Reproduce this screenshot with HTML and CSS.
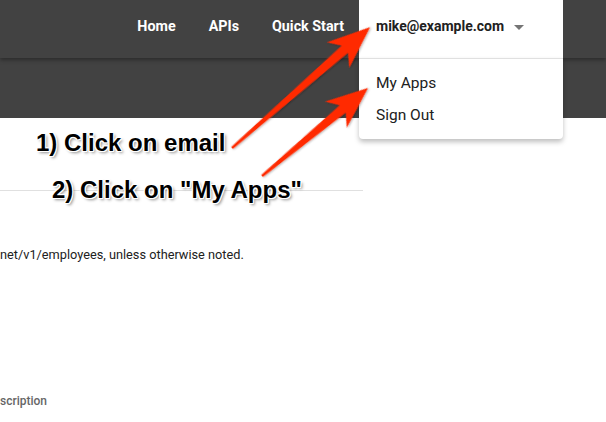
FILE: index.html
```html
<!DOCTYPE html>
<html lang="en">
<head>
<meta charset="utf-8">
<title>API Portal</title>
<link rel="stylesheet" href="styles.css">
</head>
<body>
<div class="page">
  <header class="topbar">
    <nav class="nav">
      <a class="nav-link" href="#">Home</a>
      <a class="nav-link" href="#">APIs</a>
      <a class="nav-link" href="#">Quick Start</a>
    </nav>
    <div class="user">
      <div class="user-btn">
        <span class="email">mike@example.com</span>
        <span class="caret"></span>
      </div>
      <ul class="menu">
        <li class="menu-item">My Apps</li>
        <li class="menu-item">Sign Out</li>
      </ul>
    </div>
  </header>
  <div class="band"></div>
  <main class="content">
    <div class="rule"></div>
    <p class="base">net/v1/employees, unless otherwise noted.</p>
    <div class="th">scription</div>
  </main>

  <div class="note note-1">1) Click on email</div>
  <div class="note note-2">2) Click on "My Apps"</div>

  <svg class="arrows" width="606" height="422" viewBox="0 0 606 422">
    <defs>
      <filter id="sh" x="-20%" y="-20%" width="140%" height="140%">
        <feDropShadow dx="0.5" dy="1" stdDeviation="0.8" flood-color="#000" flood-opacity="0.35"/>
      </filter>
    </defs>
    <g transform="translate(232 148) rotate(-41.2)" filter="url(#sh)">
      <polygon class="arrow" points="0,-1.2 150,-4.8 141,-17 183.5,0 141,17 150,4.8 0,1.2"/>
    </g>
    <g transform="translate(262 176) rotate(-39.7)" filter="url(#sh)">
      <polygon class="arrow" points="0,-1.2 105,-4.8 96,-17 137.8,0 96,17 105,4.8 0,1.2"/>
    </g>
  </svg>
</div>
</body>
</html>
```

FILE: styles.css
```css
* { box-sizing: border-box; }
html, body { margin: 0; padding: 0; }
body {
  font-family: Roboto, "Liberation Sans", Arial, sans-serif;
  background: #fff;
  color: #212121;
  width: 606px;
  height: 422px;
  overflow: hidden;
}
.page { position: relative; width: 606px; height: 422px; overflow: hidden; }

.topbar {
  position: relative;
  z-index: 2;
  height: 58px;
  background: #424242;
  display: flex;
  justify-content: flex-end;
  align-items: stretch;
  padding-right: 43px;
  box-shadow: 0 2px 4px rgba(0,0,0,0.35);
}
.nav { display: flex; align-items: center; padding-bottom: 6px; }
.nav-link {
  color: #fff;
  font-weight: 700;
  font-size: 14.3px;
  text-decoration: none;
  padding: 0 16px;
}
.nav-link:first-child { padding-right: 17px; }
.nav-link:last-child { padding-left: 17px; padding-right: 15px; }

.user {
  position: relative;
  width: 204px;
  background: #fff;
}
.user-btn {
  height: 58px;
  display: flex;
  align-items: center;
  padding-left: 17px;
  padding-bottom: 6px;
  gap: 10px;
}
.email { font-weight: 700; font-size: 14px; color: #212121; }
.caret {
  width: 0; height: 0;
  border-left: 5px solid transparent;
  border-right: 5px solid transparent;
  border-top: 5px solid #757575;
  margin-top: 2px;
}
.menu {
  position: absolute;
  top: 58px; left: 0; right: 0;
  margin: 0;
  padding: 8px 0;
  list-style: none;
  background: #fff;
  border-top: 1px solid #e0e0e0;
  border-radius: 0 0 4px 4px;
  box-shadow: 0 3px 5px rgba(0,0,0,0.25);
}
.menu-item {
  height: 32px;
  line-height: 32px;
  padding-left: 17px;
  font-size: 15.5px;
  color: #212121;
}

.band { height: 60px; background: #424242; }

.content { padding-top: 72px; }
.rule { width: 363px; border-top: 1px solid #e0e0e0; }
.base {
  margin: 55px 0 0;
  font-size: 12.75px;
  line-height: 18px;
  color: #212121;
}
.th {
  margin-top: 129px;
  font-size: 12px;
  line-height: 16px;
  color: #666;
  font-weight: 500;
}

.note {
  position: absolute;
  z-index: 4;
  font-family: "Liberation Sans", Arial, sans-serif;
  font-weight: 700;
  font-size: 24px;
  line-height: 28px;
  color: #000;
  white-space: nowrap;
  text-shadow:
    1px 0 0 #fff, -1px 0 0 #fff, 0 1px 0 #fff, 0 -1px 0 #fff,
    1px 1px 0 #fff, -1px -1px 0 #fff, 1px -1px 0 #fff, -1px 1px 0 #fff,
    2px 2px 3px rgba(0,0,0,0.45);
}
.note-1 { left: 36px; top: 129px; }
.note-2 { left: 52px; top: 176px; }

.arrows { position: absolute; left: 0; top: 0; z-index: 3; }
.arrow { fill: #ff2a00; }
```
